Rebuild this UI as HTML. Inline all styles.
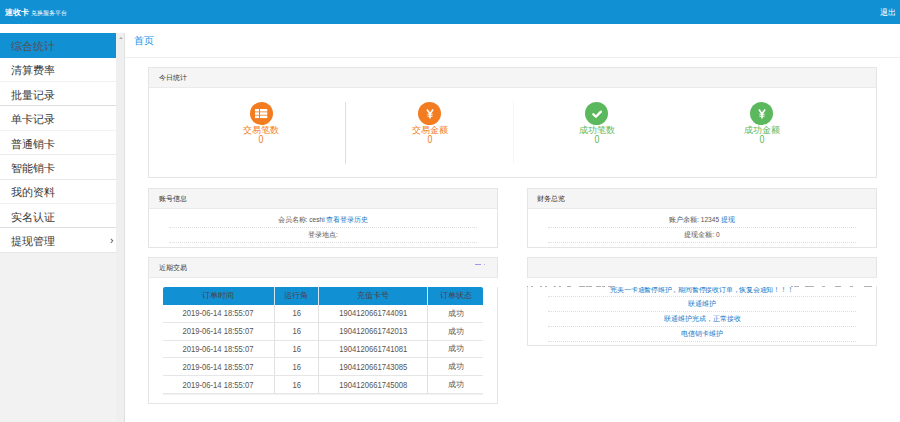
<!DOCTYPE html>
<html><head><meta charset="utf-8">
<style>
*{margin:0;padding:0;box-sizing:border-box}
html,body{width:900px;height:422px;overflow:hidden;background:#fff;font-family:"Liberation Sans",sans-serif;color:#333}
.abs{position:absolute}
#hdr{left:0;top:0;width:900px;height:23.5px;background:#1191d4}
#hdr .t1{left:4.8px;top:7.6px;font-size:7.8px;font-weight:bold;color:#fff;line-height:10px;white-space:nowrap}
#hdr .t2{left:30.5px;top:8px;font-size:6.2px;color:#fff;line-height:9px;white-space:nowrap}
#hdr .out{left:880px;top:7.5px;font-size:7.6px;color:#fff;line-height:10px}
#side{left:0;top:33px;width:125px;height:389px;background:#f2f2f2}
.mi{position:absolute;left:0;width:116px;height:24.4px;background:#fff;border-bottom:1px solid #f0f0f0;font-size:11.2px;line-height:24px;padding-top:0.8px;padding-left:11px;color:#383838;white-space:nowrap;font-weight:350}
.mi.act{background:#1191d4;color:#555050;border-bottom:none}
#sb{left:116px;top:33px;width:9px;height:389px;background:#efefef;border-right:1px solid #e0e0e0}
.pn{position:absolute;border:1px solid #e5e5e5;background:#fff}
.ph{position:absolute;left:0;top:0;right:0;height:19.5px;background:#f5f5f5;border-bottom:1px solid #eaeaea;font-size:6.5px;line-height:19px;padding-left:10px;color:#333;white-space:nowrap}
.circ{position:absolute;width:23px;height:23px;border-radius:50%}
.circ svg{position:absolute}
.lbl{position:absolute;font-size:9.2px;line-height:10px;white-space:nowrap;text-align:center;width:80px;margin-left:-40px}
.zero{position:absolute;font-size:10.4px;line-height:10px;white-space:nowrap;text-align:center;width:40px;margin-left:-20px;transform:scaleX(.85)}
.row{position:absolute;text-align:center;font-size:6.6px;line-height:10px;white-space:nowrap;color:#555}
.dot{position:absolute;height:0;border-top:1px dotted #dedede}
a{color:#1477c8;text-decoration:none}
table{position:absolute;border-collapse:separate;border-spacing:0;font-size:8.6px;color:#555;border-radius:2px 2px 0 0;overflow:hidden;box-shadow:0 1px 1px rgba(0,0,0,.06)}
td,th{text-align:center;font-weight:normal;height:17.8px;padding:0;border-right:1px solid #e0e0e0;border-bottom:1px solid #e6e6e6}
th{background:#1191d4;color:#4a4444;font-size:7.6px;border-right:1px solid #d8e6ee;border-bottom:none;height:17.6px}
td:last-child,th:last-child{border-right:none}
td span{display:inline-block;transform:scaleX(.89)}
</style></head><body>
<div id="hdr" class="abs">
  <div class="abs t1">速收卡</div>
  <div class="abs t2">兑换服务平台</div>
  <div class="abs out">退出</div>
</div>
<div id="side" class="abs"></div>
<div class="mi act" style="top:33px;height:24.5px">综合统计</div>
<div class="mi" style="top:57.5px;border-bottom-color:#f0f0f0">清算费率</div>
<div class="mi" style="top:82px;border-bottom-color:#dedede">批量记录</div>
<div class="mi" style="top:106.4px;border-bottom-color:#f2f2f2">单卡记录</div>
<div class="mi" style="top:130.8px;border-bottom-color:#ebebeb">普通销卡</div>
<div class="mi" style="top:155.2px;border-bottom-color:#e8e8e8">智能销卡</div>
<div class="mi" style="top:179.6px;border-bottom-color:#f0f0f0">我的资料</div>
<div class="mi" style="top:204px;border-bottom-color:#dedede">实名认证</div>
<div class="mi" style="top:228.4px;border-bottom-color:#e6e6e6">提现管理<svg style="position:absolute;left:109.5px;top:9.3px" width="4" height="6" viewBox="0 0 4 6"><path d="M0.8 0.8 L2.8 2.8 L0.8 4.8" stroke="#777" stroke-width="1.1" fill="none"/></svg></div>
<div id="sb" class="abs"><div class="abs" style="left:2.5px;top:3.5px;width:0;height:0;border-left:2px solid transparent;border-right:2px solid transparent;border-bottom:2.5px solid #aaa"></div></div>

<div class="abs" style="left:133.5px;top:34.5px;font-size:9.6px;line-height:12px;color:#1c93e8;font-weight:500">首页</div>
<div class="abs" style="left:125px;top:57px;width:775px;height:1px;background:#eeeeee"></div>

<!-- panel 1 -->
<div class="pn" style="left:148px;top:67px;width:729px;height:111px">
  <div class="ph">今日统计</div>
</div>
<div class="abs" style="left:345px;top:102px;width:1px;height:62px;background:#dedede"></div>
<div class="abs" style="left:512.5px;top:101px;width:1px;height:63px;background:#f5f5f5"></div>

<div class="circ abs" style="left:250px;top:101.8px;background:#f37c21">
  <svg width="13" height="10" viewBox="0 0 13 10" style="left:4.8px;top:7.2px">
    <g fill="#fff"><rect x="0" y="0" width="4" height="2.5"/><rect x="5" y="0" width="7.3" height="2.5"/>
    <rect x="0" y="3.3" width="4" height="2.5"/><rect x="5" y="3.3" width="7.3" height="2.5"/>
    <rect x="0" y="6.6" width="4" height="2.5"/><rect x="5" y="6.6" width="7.3" height="2.5"/></g>
  </svg>
</div>
<div class="circ abs" style="left:418.2px;top:101.8px;background:#f37c21">
  <svg width="8" height="10" viewBox="0 0 8 10" style="left:7.6px;top:7.2px">
    <g stroke="#fff" stroke-width="1.6" fill="none"><path d="M0.9 0.6 L4 4.8 L7.1 0.6"/><path d="M4 4.8 V9.4"/><path d="M1.4 5.3 H6.6 M1.4 7.2 H6.6" stroke-width="1.1"/></g>
  </svg>
</div>
<div class="circ abs" style="left:585.3px;top:101.8px;background:#5cb85c">
  <svg width="11" height="9" viewBox="0 0 11 9" style="left:6.3px;top:8.4px">
    <path d="M1.3 4.2 L3.9 6.8 L8.9 1.6" stroke="#fff" stroke-width="2.3" fill="none" stroke-linecap="round" stroke-linejoin="round"/>
  </svg>
</div>
<div class="circ abs" style="left:750.3px;top:101.8px;background:#5cb85c">
  <svg width="8" height="10" viewBox="0 0 8 10" style="left:7.6px;top:7.2px">
    <g stroke="#fff" stroke-width="1.6" fill="none"><path d="M0.9 0.6 L4 4.8 L7.1 0.6"/><path d="M4 4.8 V9.4"/><path d="M1.4 5.3 H6.6 M1.4 7.2 H6.6" stroke-width="1.1"/></g>
  </svg>
</div>

<div class="lbl" style="left:261.3px;top:125px;color:#f37c21">交易笔数</div>
<div class="zero" style="left:261.3px;top:134.6px;color:#f37c21">0</div>
<div class="lbl" style="left:429.5px;top:125px;color:#f37c21">交易金额</div>
<div class="zero" style="left:429.5px;top:134.6px;color:#f37c21">0</div>
<div class="lbl" style="left:596.7px;top:125px;color:#5cb85c">成功笔数</div>
<div class="zero" style="left:596.7px;top:134.6px;color:#5cb85c">0</div>
<div class="lbl" style="left:761.7px;top:125px;color:#5cb85c">成功金额</div>
<div class="zero" style="left:761.7px;top:134.6px;color:#5cb85c">0</div>

<!-- panel 2 -->
<div class="pn" style="left:148px;top:188.4px;width:350px;height:59.5px">
  <div class="ph">账号信息</div>
</div>
<div class="row" style="left:169px;width:308px;top:215.4px">会员名称: ceshi <a>查看登录历史</a></div>
<div class="dot" style="left:169px;width:308px;top:227px"></div>
<div class="row" style="left:169px;width:308px;top:230px">登录地点:</div>
<div class="dot" style="left:169px;width:308px;top:242px"></div>

<!-- panel 3 -->
<div class="pn" style="left:527px;top:188.4px;width:350px;height:59.5px">
  <div class="ph" style="padding-left:8.5px">财务总览</div>
</div>
<div class="row" style="left:548px;width:308px;top:215.4px">账户余额: 12345 <a>提现</a></div>
<div class="dot" style="left:548px;width:308px;top:227px"></div>
<div class="row" style="left:548px;width:308px;top:230px">提现金额: 0</div>
<div class="dot" style="left:548px;width:308px;top:242px"></div>

<!-- panel 4 -->
<div class="pn" style="left:148px;top:257.4px;width:350px;height:146.5px">
  <div class="ph">近期交易</div>
</div>
<div class="abs" style="left:497px;top:278px;width:2px;height:9px;background:#fff"></div>
<div class="abs" style="left:475px;top:264px;width:6px;height:1px;background:#9a9af0"></div>
<div class="abs" style="left:484px;top:264px;width:1px;height:1px;background:#b8b8f4"></div>

<table style="left:163px;top:287.4px;width:320px">
<tr><th style="width:111.8px">订单时间</th><th style="width:44.1px">运行角</th><th style="width:109.3px">充值卡号</th><th>订单状态</th></tr>
<tr><td><span>2019-06-14 18:55:07</span></td><td><span>16</span></td><td><span>1904120661744091</span></td><td style="font-size:7.8px">成功</td></tr>
<tr><td><span>2019-06-14 18:55:07</span></td><td><span>16</span></td><td><span>1904120661742013</span></td><td style="font-size:7.8px">成功</td></tr>
<tr><td><span>2019-06-14 18:55:07</span></td><td><span>16</span></td><td><span>1904120661741081</span></td><td style="font-size:7.8px">成功</td></tr>
<tr><td><span>2019-06-14 18:55:07</span></td><td><span>16</span></td><td><span>1904120661743085</span></td><td style="font-size:7.8px">成功</td></tr>
<tr><td><span>2019-06-14 18:55:07</span></td><td><span>16</span></td><td><span>1904120661745008</span></td><td style="font-size:7.8px">成功</td></tr>
</table>

<!-- panel 5 -->
<div class="pn" style="left:527px;top:257.4px;width:350px;height:89px">
  <div class="ph"></div>
</div>
<div class="abs" style="left:526px;top:278px;width:352px;height:8px;background:#fff"></div>
<svg class="abs" style="left:527px;top:286px" width="350" height="1"><g fill="#b0b0b0"><rect x="0" y="0" width="1" height="1"/><rect x="4" y="0" width="2" height="1"/><rect x="13" y="0" width="2" height="1"/><rect x="18" y="0" width="2" height="1"/><rect x="27" y="0" width="2" height="1"/><rect x="32" y="0" width="2" height="1"/><rect x="40" y="0" width="4" height="1"/><rect x="52" y="0" width="6" height="1"/><rect x="59" y="0" width="6" height="1"/><rect x="69" y="0" width="5" height="1"/><rect x="75" y="0" width="3" height="1"/><rect x="81" y="0" width="7" height="1"/><rect x="264" y="0" width="2" height="1"/><rect x="267" y="0" width="5" height="1"/><rect x="278" y="0" width="9" height="1"/><rect x="295" y="0" width="3" height="1"/><rect x="308" y="0" width="6" height="1"/><rect x="323" y="0" width="3" height="1"/><rect x="337" y="0" width="8" height="1"/></g></svg>
<div class="abs" style="left:548px;width:308px;top:286.6px;height:8px;overflow:hidden"><div class="row" style="left:0;width:308px;top:-2px;letter-spacing:-0.22px"><a>完美一卡通暂停维护，期间暂停接收订单，恢复会通知！！！</a></div></div>
<div class="dot" style="left:548px;width:308px;top:296px"></div>
<div class="row" style="left:548px;width:308px;top:299px"><a>联通维护</a></div>
<div class="dot" style="left:548px;width:308px;top:311px"></div>
<div class="row" style="left:548px;width:308px;top:314px"><a>联通维护完成，正常接收</a></div>
<div class="dot" style="left:548px;width:308px;top:326px"></div>
<div class="row" style="left:548px;width:308px;top:329px"><a>电信销卡维护</a></div>
<div class="dot" style="left:548px;width:308px;top:341px"></div>
</body></html>
